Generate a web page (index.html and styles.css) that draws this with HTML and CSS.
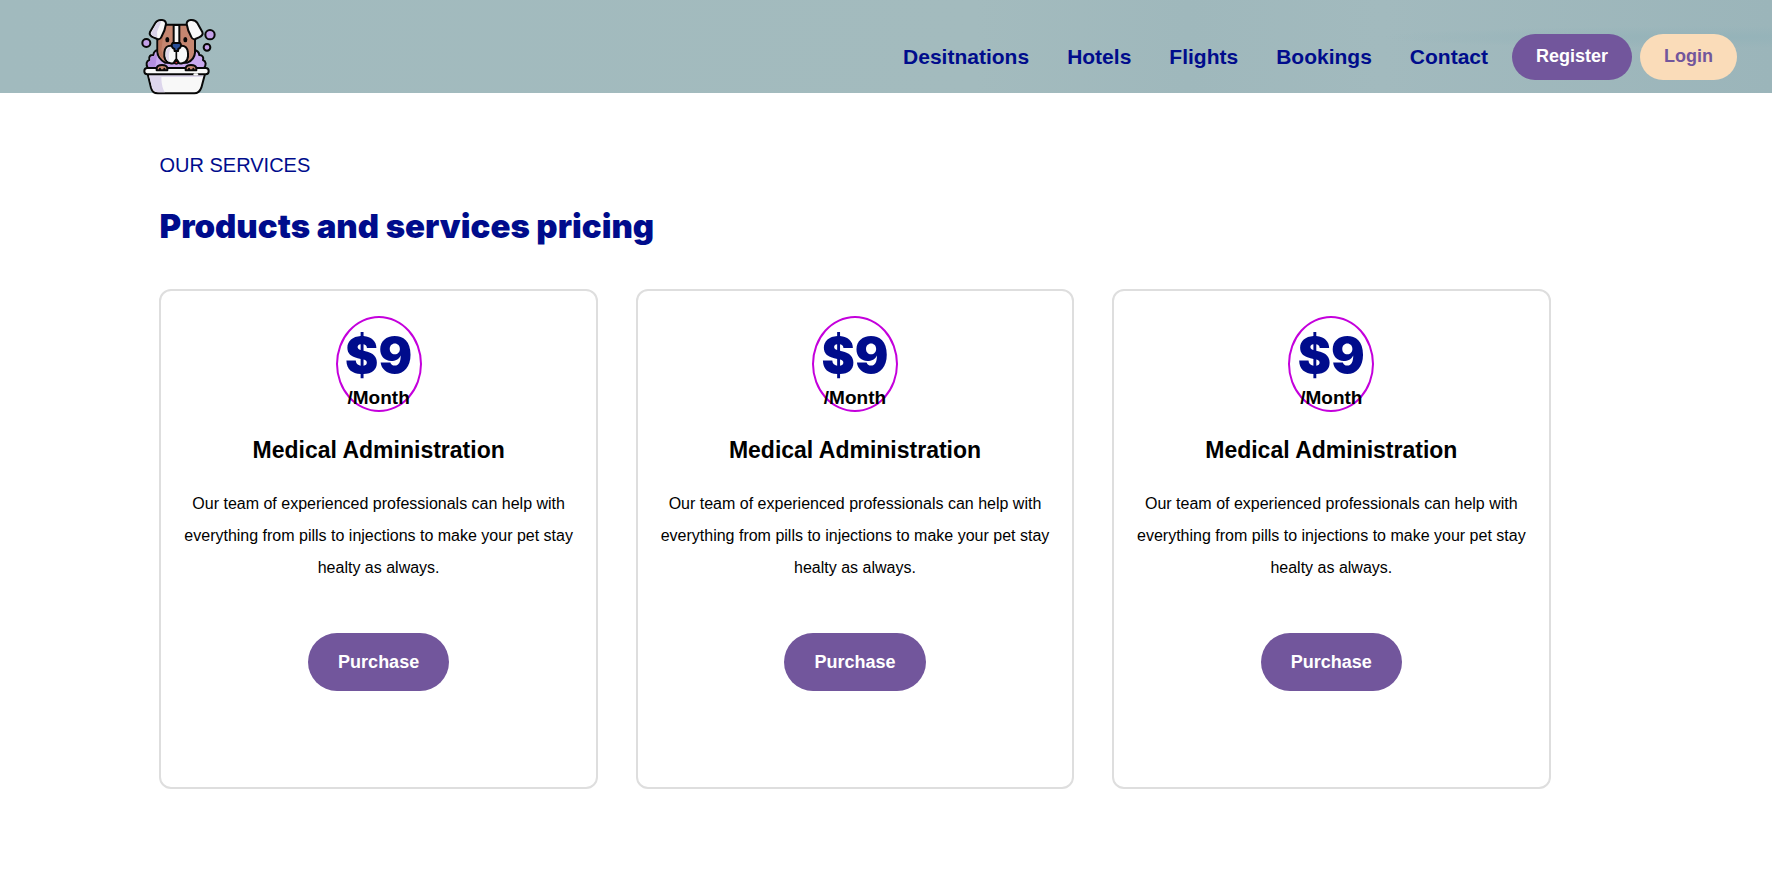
FILE: index.html
```html
<!DOCTYPE html>
<html lang="en">
<head>
<meta charset="utf-8">
<title>Products and services pricing</title>
<link rel="stylesheet" href="styles.css">
</head>
<body>
<header class="header">
  <a class="logo" href="#" aria-label="Home">
    <svg class="logo-art" viewBox="36 27 225 228" aria-hidden="true" stroke="#080808" stroke-width="6" stroke-linejoin="round" stroke-linecap="round">
      <path fill="#c9a9ee" d="M54 174C46 162 50 153 58 150C55 139 62 134 70 135C71 126 77 120 84 121L192 121C202 121 207 128 208 135C217 135 222 142 219 150C229 154 229 165 222 174Z"/>
      <path fill="#b48fe0" stroke="none" d="M57 171C51 161 55 154 62 152C60 142 66 138 73 139L82 128L76 171Z"/>
      <path fill="#c58670" d="M104 44H174L195 78V128C194 143 184 153 172 158H105C93 151 83 141 82 126V78Z"/>
      <path fill="#ba755d" stroke="none" d="M86 88L100 76L94 120L103 147C94 143 86 135 86 123Z"/>
      <path fill="#f8f8f8" d="M131 45H148V100H131Z"/>
      <path fill="#f8f8f8" d="M108 42C108 35 103 31 96 30C87 29 80 32 76 39L60 66C57 73 62 79 70 82L82 87C88 89 92 86 94 81C101 69 106 56 108 42Z"/>
      <path fill="#f8f8f8" d="M170 42C170 35 175 31 182 30C191 29 198 32 202 39L217 66C220 73 215 79 207 82L196 87C190 89 186 86 184 81C177 69 172 56 170 42Z"/>
      <path fill="#d9d2e8" stroke="none" d="M94 34L81 66L82 82L72 79C63 76 62 71 65 66L79 41C82 36 87 33 94 34Z"/>
      <path fill="#f8f8f8" d="M124 107C112 106 104 113 103 127C101 145 107 157 121 160C130 162 136 158 139 152C142 158 148 162 157 160C171 157 176 146 174 128C173 114 165 106 153 107Z"/>
      <path fill="#ddd5e9" stroke="none" d="M109 122C112 114 117 111 124 112C116 123 115 142 119 156C108 153 105 136 109 122Z"/>
      <path fill="#294f99" d="M128 99H150C156 105 153 113 145 117L144 123H134L133 117C125 113 122 105 128 99Z"/>
      <path d="M139 124V146M139 146L132 156M139 146L146 156" stroke-width="5"/>
      <ellipse cx="139" cy="158" rx="5" ry="4" fill="#e52d39" stroke-width="4"/>
      <g fill="#080808" stroke="none"><ellipse cx="112" cy="89" rx="6" ry="8"/><ellipse cx="166" cy="89" rx="6" ry="8"/></g>
      <path fill="#f8f8f8" d="M53 192L63 233C66 244 73 250 83 250H193C203 250 210 244 214 233L225 192Z"/>
      <path fill="#ddd6ec" stroke="none" d="M57 195L66 231C69 242 77 247 87 247H105C96 235 94 212 94 201H218V195Z"/>
      <rect x="43" y="174" width="193" height="19" rx="9" fill="#f8f8f8"/>
      <path d="M194 193H201" stroke="#f8f8f8" stroke-width="7"/>
      <path fill="#c58670" d="M80 181V174C82 166 88 165 96 165C104 165 110 166 112 174V181H103V176V181H90V176V181Z"/>
      <path fill="#c58670" d="M167 181V174C169 166 175 165 183 165C191 165 197 166 199 174V181H190V176V181H177V176V181Z"/>
      <g fill="#c4a0e8"><circle cx="49" cy="99" r="12"/><circle cx="240" cy="74" r="14"/><circle cx="231" cy="112" r="10"/></g>
    </svg>
  </a>
  <nav class="nav" aria-label="Main">
    <a href="#">Desitnations</a>
    <a href="#">Hotels</a>
    <a href="#">Flights</a>
    <a href="#">Bookings</a>
    <a href="#">Contact</a>
  </nav>
  <div class="account">
    <button class="button" type="button">Register</button>
    <button class="button button-light" type="button">Login</button>
  </div>
</header>
<main class="services">
  <p class="eyebrow">OUR SERVICES</p>
  <h1 class="title">Products and services pricing</h1>
  <div class="cards">
    <article class="card">
      <div class="price"><strong class="amount">$9</strong><span class="period">/Month</span></div>
      <h2 class="card-title">Medical Administration</h2>
      <p class="card-text">Our team of experienced professionals can help with everything from pills to injections to make your pet stay healty as always.</p>
      <button class="button button-large" type="button">Purchase</button>
    </article>
    <article class="card">
      <div class="price"><strong class="amount">$9</strong><span class="period">/Month</span></div>
      <h2 class="card-title">Medical Administration</h2>
      <p class="card-text">Our team of experienced professionals can help with everything from pills to injections to make your pet stay healty as always.</p>
      <button class="button button-large" type="button">Purchase</button>
    </article>
    <article class="card">
      <div class="price"><strong class="amount">$9</strong><span class="period">/Month</span></div>
      <h2 class="card-title">Medical Administration</h2>
      <p class="card-text">Our team of experienced professionals can help with everything from pills to injections to make your pet stay healty as always.</p>
      <button class="button button-large" type="button">Purchase</button>
    </article>
  </div>
</main>
</body>
</html>
```
FILE: styles.css
```css
* { box-sizing: border-box; }

body {
  margin: 0;
  background: #fff;
  color: #000;
  font-family: "Liberation Sans", Arial, sans-serif;
  font-size: 16px;
}

.header {
  display: flex;
  align-items: center;
  height: 93px;
  padding: 20px 35px 0 8%;
  background:
    radial-gradient(ellipse at 97% 40%, #95b3b9 0%, rgba(149, 179, 185, 0) 14%),
    linear-gradient(90deg, #a1babe 0%, #a3bbbe 55%, #9fb8bc 67%, #a2babe 78%, #9bb5ba 100%);
}

.logo { display: block; width: 75px; height: 76px; }
.logo-art { display: block; width: 100%; height: 100%; overflow: visible; }

.nav {
  display: flex;
  gap: 38px;
  margin-left: auto;
  margin-right: 24px;
}

.nav a {
  color: #000c8c;
  font-size: 21px;
  font-weight: 700;
  line-height: 24px;
  text-decoration: none;
}

.account { display: flex; gap: 8px; }

.button {
  border: 0;
  border-radius: 30px;
  padding: 11px 24px 13px;
  background: #72569c;
  color: #fff;
  font-family: inherit;
  font-size: 18px;
  font-weight: 700;
  line-height: 22px;
}

.button-light { background: #fadcb9; color: #72569c; }
.button-large { padding: 18px 30px; }

.services { padding: 60px 12.5% 96px 9%; }

.eyebrow {
  margin: 0;
  color: #000c8c;
  font-size: 20px;
  line-height: 24px;
}

.title {
  margin: 29px 0 43px;
  color: #000c8c;
  font-family: "Arial Black", Inter, sans-serif;
  font-size: 33px;
  font-weight: 900;
  line-height: 40px;
}

.cards {
  display: grid;
  grid-template-columns: repeat(3, 1fr);
  gap: 38px;
}

.card {
  display: flex;
  flex-direction: column;
  align-items: center;
  min-height: 500px;
  padding: 25px 16px;
  border: 2px solid #dedede;
  border-radius: 12px;
  text-align: center;
}

.price {
  display: flex;
  flex-direction: column;
  align-items: center;
  gap: 2px;
  width: 86px;
  height: 96px;
  padding-top: 8px;
  border: 2px solid #c400dc;
  border-radius: 50%;
}

.amount {
  color: #000c8c;
  font-family: "Arial Black", Inter, sans-serif;
  font-size: 50px;
  font-weight: 900;
  line-height: 58px;
}

.period {
  font-size: 19px;
  font-weight: 700;
  line-height: 24px;
}

.card-title {
  margin: 24px 0;
  font-size: 23px;
  line-height: 28px;
}

.card-text {
  margin: 0 0 49px;
  line-height: 32px;
}
```
